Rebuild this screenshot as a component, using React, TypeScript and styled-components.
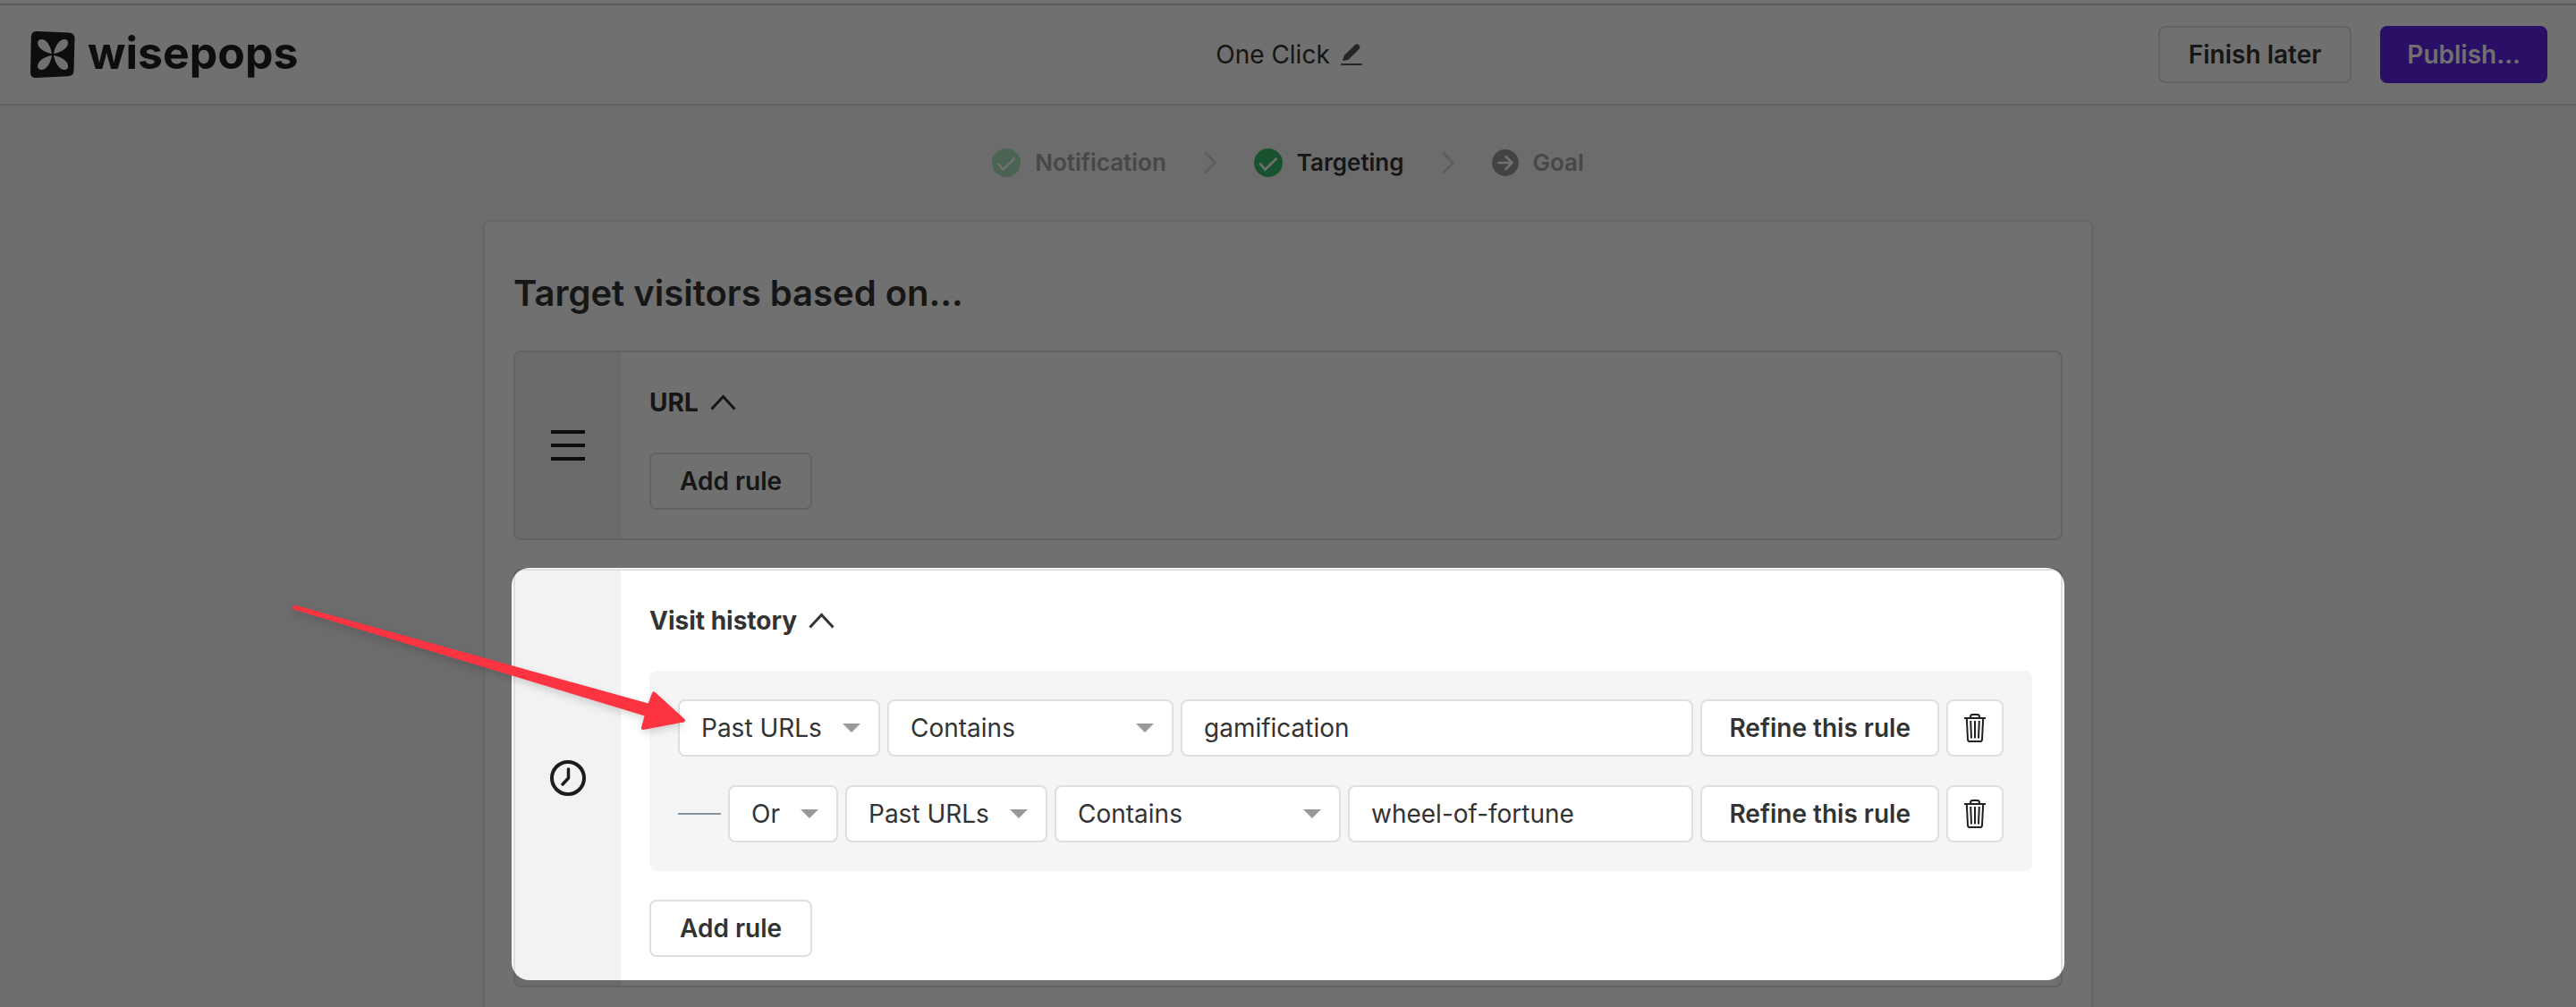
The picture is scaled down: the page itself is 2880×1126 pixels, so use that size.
import React, { useState } from "react";
import styled, { createGlobalStyle } from "styled-components";

const GlobalStyle = createGlobalStyle`
  *, *::before, *::after { box-sizing: border-box; }
  body { margin: 0; background: #707070; }
  button, input, select { font: inherit; color: inherit; margin: 0; }
`;

const Page = styled.div`
  position: relative;
  display: flex;
  flex-direction: column;
  min-height: 100vh;
  overflow: hidden;
  background: #f6f6f6;
  color: #333;
  font-family: Inter, "Liberation Sans", sans-serif;
  font-size: 28px;
  line-height: 32px;
`;

const Header = styled.header`
  display: grid;
  grid-template-columns: 1fr auto 1fr;
  align-items: center;
  height: 118px;
  padding: 6px 32px 0 34px;
  background: #fff;
  border-bottom: 2px solid #dedede;
`;

const TopRule = styled.div`
  height: 6px;
  margin-bottom: -6px;
  border-bottom: 2px solid #c9c9c9;
  z-index: 1;
`;

const Logo = styled.a`
  display: flex;
  align-items: center;
  gap: 14px;
  color: #1e1e22;
  font-size: 50px;
  font-weight: 700;
  line-height: 56px;
  text-decoration: none;
`;

const LogoText = styled.span`
  padding-bottom: 4px;
`;

const CampaignName = styled.h1`
  display: flex;
  align-items: center;
  gap: 12px;
  margin: 0;
  font-size: 28px;
  font-weight: 400;
`;

const IconButton = styled.button`
  display: flex;
  padding: 0;
  border: 0;
  background: none;
`;

const Actions = styled.div`
  display: flex;
  justify-content: flex-end;
  gap: 32px;
`;

const Button = styled.button`
  flex: none;
  height: 64px;
  padding: 0 32px;
  border: 2px solid #dfdfdf;
  border-radius: 8px;
  background: #fff;
  font-weight: 600;
  white-space: nowrap;
`;

const PrimaryButton = styled(Button)`
  padding: 0 28px;
  border-color: #6122e8;
  background: #6122e8;
  color: #fff;
`;

const RefineButton = styled(Button)`
  padding: 0 30px;
`;

const SquareButton = styled(Button)`
  display: flex;
  align-items: center;
  justify-content: center;
  width: 64px;
  padding: 0;
`;

const Steps = styled.ol`
  display: flex;
  align-items: center;
  justify-content: center;
  gap: 42px;
  height: 128px;
  margin: 0;
  padding: 0;
  font-size: 26px;
  list-style: none;
`;

const Step = styled.li<{ $color: string }>`
  display: flex;
  align-items: center;
  gap: 16px;
  color: ${(p) => p.$color};
  font-weight: 600;
`;

const Separator = styled.li`
  display: flex;
`;

const Panel = styled.main`
  flex: 1;
  width: calc(100% - 64px);
  max-width: 1800px;
  margin: 0 auto;
  padding: 56px 32px 20px;
  border: 2px solid #ebebeb;
  border-bottom: 0;
  border-radius: 8px 8px 0 0;
  background: #fff;
`;

const Heading = styled.h2`
  margin: 0 0 40px;
  font-size: 40px;
  font-weight: 600;
  line-height: 48px;
`;

const Sections = styled.div`
  display: flex;
  flex-direction: column;
  gap: 32px;
`;

const Card = styled.section`
  position: relative;
  display: flex;
  border: 2px solid #dfdfdf;
  border-radius: 8px;
  background: #fff;
`;

const CardAside = styled.div`
  display: flex;
  flex: none;
  align-items: center;
  justify-content: center;
  width: 118px;
  border-radius: 6px 0 0 6px;
  background: #f2f2f2;
`;

const CardBody = styled.div`
  display: flex;
  flex: 1;
  flex-direction: column;
  align-items: flex-start;
  gap: 32px;
  min-width: 0;
  padding: 32px;
`;

const CardTitle = styled.h3`
  margin: 0;
  font-size: 28px;
  font-weight: 700;
  line-height: 48px;
`;

const CardToggle = styled.button`
  display: flex;
  align-items: center;
  gap: 13px;
  padding: 0;
  border: 0;
  background: none;
`;

const Rules = styled.div`
  display: flex;
  flex-direction: column;
  align-self: stretch;
  gap: 32px;
  padding: 32px;
  border-radius: 8px;
  background: #f5f5f5;
`;

const RuleRow = styled.div`
  position: relative;
  display: flex;
  align-items: center;
  gap: 8px;
`;

const Connector = styled.span`
  flex: none;
  width: 48px;
  height: 2px;
  background: #8494a3;
`;

const SelectBox = styled.span<{ $width: number }>`
  display: grid;
  flex: none;
  width: ${(p) => p.$width}px;
  align-items: center;

  > * { grid-area: 1 / 1; }
  > svg { justify-self: end; margin-right: 22px; pointer-events: none; }
`;

const SelectField = styled.select`
  width: 100%;
  height: 64px;
  padding: 0 24px;
  border: 2px solid #dfdfdf;
  border-radius: 8px;
  background: #fff;
  appearance: none;
`;

const TextField = styled.input`
  flex: 1;
  min-width: 0;
  height: 64px;
  padding: 0 24px;
  border: 2px solid #dfdfdf;
  border-radius: 8px;
  background: #fff;
`;

/* Dims everything around the highlighted card. */
const Spotlight = styled.div`
  position: absolute;
  z-index: 2;
  top: -3px;
  right: -4px;
  bottom: 6px;
  left: -4px;
  border-radius: 20px;
  box-shadow: 0 0 0 4000px rgba(0, 0, 0, 0.56);
  pointer-events: none;
`;

const Pointer = styled.svg`
  position: absolute;
  z-index: 3;
  top: -110px;
  left: -434px;
  filter: drop-shadow(0 4px 4px rgba(0, 0, 0, 0.15));
  pointer-events: none;
`;

const LogoMark = () => (
  <svg width="50" height="52" viewBox="0 0 50 52" aria-hidden="true">
    <path
      fill="#1e1e22"
      d="M7 0 L43 1.500 Q49.500 2 49.500 8 L48.500 44 Q48.300 50 42 50.300 L6 52 Q0 52 0 46 L.8 6 Q1 0 7 0Z"
    />
    <g fill="#fff">
      <path d="M24 25 C17 23.500 11 21 8.600 15.500 C7 11 9.500 8.500 13.500 9 C19.500 10.500 22.500 17.500 24 25Z" />
      <path d="M26 25 C27.500 17.500 31 10.500 37 9 C41 8.500 43 11 41.600 15.500 C39 21 33 23.500 26 25Z" />
      <path d="M24 27 C17 28.500 11 31 8.600 36.500 C7 41 9.500 43.500 13.500 43 C19.500 41.500 22.500 34.500 24 27Z" />
      <path d="M26 27 C27.500 34.500 31 41.500 37 43 C41 43.500 43 41 41.600 36.500 C39 31 33 28.500 26 27Z" />
    </g>
  </svg>
);

const PencilIcon = () => (
  <svg width="24" height="24" viewBox="0 0 24 24" aria-hidden="true">
    <path
      fill="#555"
      d="M2.500 19 Q2 19 2.200 18.500 L3.600 13.300 L15.800 1.200 Q18 -.6 20.300 1.200 Q22.300 3.500 20.600 5.800 L8.500 17.800Z"
    />
    <path d="M1 23H23" stroke="#555" strokeWidth="2" strokeLinecap="round" />
  </svg>
);

const CheckIcon = ({ fill }: { fill: string }) => (
  <svg width="32" height="32" viewBox="0 0 32 32" aria-hidden="true">
    <circle cx="16" cy="16" r="16" fill={fill} />
    <path d="M6.500 16.500 L12.500 23.500 L25.500 11" fill="none" stroke="#fff" strokeWidth="2.600" />
  </svg>
);

const NextIcon = () => (
  <svg width="30" height="30" viewBox="0 0 30 30" aria-hidden="true">
    <circle cx="15" cy="15" r="15" fill="#9a9a9a" />
    <path
      d="M7.500 15H22 M15.500 8 L22.500 15 L15.500 22"
      fill="none"
      stroke="#fff"
      strokeWidth="2.600"
      strokeLinecap="round"
      strokeLinejoin="round"
    />
  </svg>
);

const StepChevron = () => (
  <svg width="14" height="24" viewBox="0 0 14 24" aria-hidden="true">
    <path d="M1.500 1 L12.500 12 L1.500 23" fill="none" stroke="#d4d4d4" strokeWidth="3" />
  </svg>
);

const CollapseIcon = () => (
  <svg width="29" height="18" viewBox="0 0 29 18" aria-hidden="true">
    <path d="M1.500 16.500 L14.500 2.500 L27.500 16.500" fill="none" stroke="#333" strokeWidth="3" />
  </svg>
);

const LinesIcon = () => (
  <svg width="38" height="34" viewBox="0 0 38 34" aria-hidden="true">
    <path d="M0 2H38M0 17H38M0 32H38" stroke="#1c1c1c" strokeWidth="4" />
  </svg>
);

const ClockIcon = () => (
  <svg width="40" height="40" viewBox="0 0 40 40" aria-hidden="true">
    <circle cx="20" cy="20" r="18" fill="none" stroke="#1c1c1c" strokeWidth="4" />
    <path
      d="M20.500 10V20L14 27"
      fill="none"
      stroke="#1c1c1c"
      strokeWidth="3.500"
      strokeLinecap="round"
      strokeLinejoin="round"
    />
  </svg>
);

const TrashIcon = () => (
  <svg width="24" height="32" viewBox="0 0 24 32" fill="none" stroke="#1f1f22" strokeWidth="2" aria-hidden="true">
    <path d="M0 5H24" />
    <path d="M7 5V3.500Q7 1 9.500 1H14.500Q17 1 17 3.500V5" />
    <path d="M2.800 5L4 29Q4.200 31 6 31H18Q19.800 31 20 29L21.200 5" />
    <path d="M7.200 8L8 27.500M12 8V27.500M16.800 8L16 27.500" />
  </svg>
);

const CaretIcon = () => (
  <svg width="20" height="10" viewBox="0 0 20 10" aria-hidden="true">
    <path d="M0 0H20L10 10Z" fill="#999" />
  </svg>
);

type SelectProps = { label: string; width: number; options: string[] };

const Select = ({ label, width, options }: SelectProps) => (
  <SelectBox $width={width}>
    <SelectField aria-label={label}>
      {options.map((option) => (
        <option key={option}>{option}</option>
      ))}
    </SelectField>
    <CaretIcon />
  </SelectBox>
);

const RuleFields = ({ value, name }: { value: string; name: string }) => {
  const [text, setText] = useState(value);
  return (
    <>
      <Select label={`${name} source`} width={226} options={["Past URLs"]} />
      <Select label={`${name} condition`} width={320} options={["Contains"]} />
      <TextField aria-label={`${name} value`} value={text} onChange={(e) => setText(e.target.value)} />
      <RefineButton type="button">Refine this rule</RefineButton>
      <SquareButton type="button" aria-label={`Delete ${name}`}>
        <TrashIcon />
      </SquareButton>
    </>
  );
};

export default function App() {
  return (
    <Page>
      <GlobalStyle />
      <TopRule />
      <Header>
        <Logo href="#">
          <LogoMark />
          <LogoText>wisepops</LogoText>
        </Logo>
        <CampaignName>
          One Click
          <IconButton type="button" aria-label="Rename campaign">
            <PencilIcon />
          </IconButton>
        </CampaignName>
        <Actions>
          <Button type="button">Finish later</Button>
          <PrimaryButton type="button">Publish...</PrimaryButton>
        </Actions>
      </Header>

      <Steps>
        <Step $color="#a3a3a3">
          <CheckIcon fill="#a8e2ba" />
          Notification
        </Step>
        <Separator aria-hidden="true"><StepChevron /></Separator>
        <Step $color="#333" aria-current="step">
          <CheckIcon fill="#38bb69" />
          Targeting
        </Step>
        <Separator aria-hidden="true"><StepChevron /></Separator>
        <Step $color="#a3a3a3">
          <NextIcon />
          Goal
        </Step>
      </Steps>

      <Panel>
        <Heading>Target visitors based on...</Heading>
        <Sections>
          <Card>
            <CardAside><LinesIcon /></CardAside>
            <CardBody>
              <CardTitle>
                <CardToggle type="button" aria-expanded="true">
                  URL
                  <CollapseIcon />
                </CardToggle>
              </CardTitle>
              <Button type="button">Add rule</Button>
            </CardBody>
          </Card>

          <Card>
            <CardAside><ClockIcon /></CardAside>
            <CardBody>
              <CardTitle>
                <CardToggle type="button" aria-expanded="true">
                  Visit history
                  <CollapseIcon />
                </CardToggle>
              </CardTitle>
              <Rules>
                <RuleRow>
                  <RuleFields name="Rule 1" value="gamification" />
                  <Pointer width="446" height="150" viewBox="0 0 446 150" aria-hidden="true">
                    <path
                      d="M5 6.500 L402 117 L407 103.500 L440 133.500 L395 142 L399 127 L5 7.500Z"
                      fill="#fc3441"
                      stroke="#fc3441"
                      strokeWidth="4"
                      strokeLinejoin="round"
                    />
                  </Pointer>
                </RuleRow>
                <RuleRow>
                  <Connector />
                  <Select label="Rule 2 operator" width={123} options={["Or"]} />
                  <RuleFields name="Rule 2" value="wheel-of-fortune" />
                </RuleRow>
              </Rules>
              <Button type="button">Add rule</Button>
            </CardBody>
            <Spotlight />
          </Card>
        </Sections>
      </Panel>
    </Page>
  );
}
